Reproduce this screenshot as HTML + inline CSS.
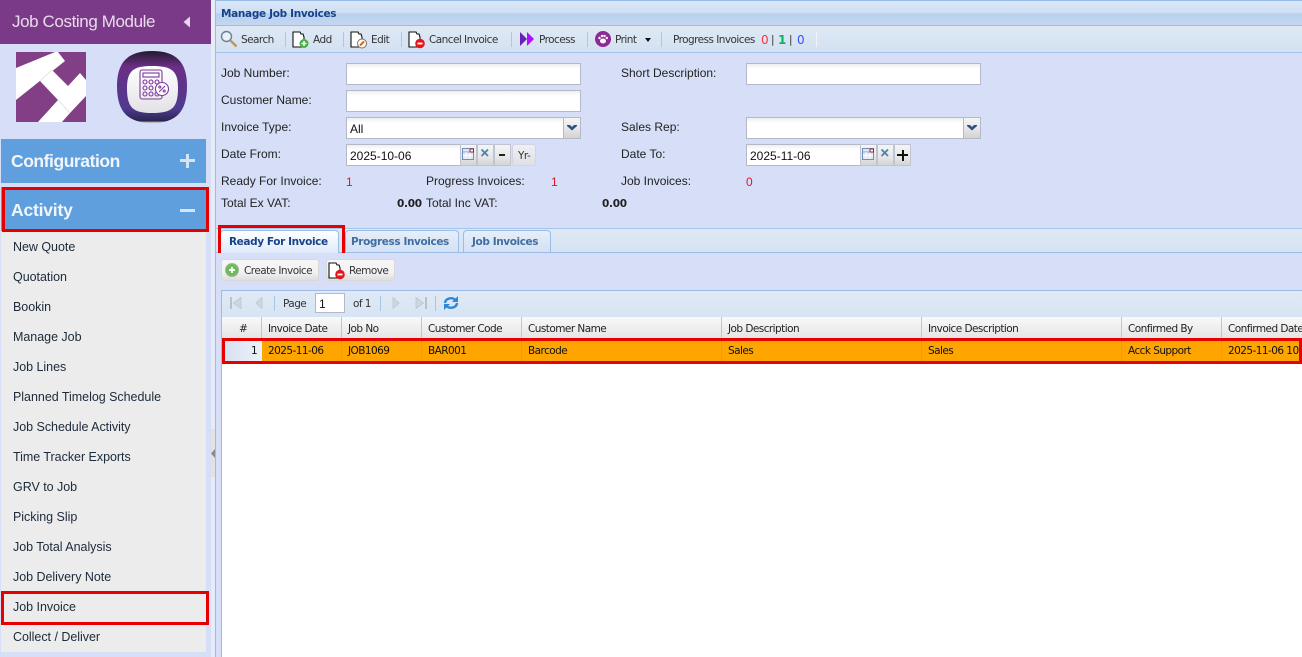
<!DOCTYPE html>
<html><head><meta charset="utf-8"><title>Manage Job Invoices</title>
<style>
html,body{margin:0;padding:0;width:1302px;height:657px;overflow:hidden;background:#fff}
body{position:relative;font-family:"Liberation Sans",sans-serif;color:#000}
div,span.t,svg{position:absolute}
.t{position:absolute;white-space:nowrap;line-height:14px}
.m{font:12.5px/16px "Liberation Sans",sans-serif;color:#1c2a3a;left:13px;white-space:nowrap;position:absolute;letter-spacing:-.03px}
.l{font:12px/14px "Liberation Sans",sans-serif;color:#222}
.d{font:10.5px/14px "DejaVu Sans",sans-serif;letter-spacing:-.55px;color:#333}
.g{font:10.5px/14px "DejaVu Sans",sans-serif;letter-spacing:-.55px;color:#222}
.r{font:10.5px/14px "DejaVu Sans",sans-serif;letter-spacing:-.55px;color:#111}
.b{font:bold 10.5px/14px "DejaVu Sans",sans-serif;letter-spacing:-.4px}
.inp{background:linear-gradient(#eef1f0,#fff 5px);border:1px solid #b5b8c8;box-sizing:border-box;height:22px}
.val{font:12px/14px "Liberation Sans",sans-serif;color:#111}
.sep{width:1px;background:#a9c8ec;height:15px;top:32px}
.btn{box-sizing:border-box;background:linear-gradient(#f4f5f6,#e6e7e8 60%,#d4d4d6);border:1px solid #c0c3d2;height:22px;top:144px}
.dd{box-sizing:border-box;background:linear-gradient(#f4f5f5,#e6e6e6 55%,#d2d2d2);border:1px solid #b5b8c8;width:18px;height:22px;top:117px}
</style></head><body>

<!-- Sidebar -->
<div style="left:0;top:0;width:211px;height:657px;background:#d6dff7"></div>
<div style="left:0;top:0;width:211px;height:44px;background:#7b3a87"></div>
<span class="t" style="left:12px;top:11px;font-size:17px;line-height:22px;color:#e9dcec;letter-spacing:-.4px">Job Costing Module</span>
<svg style="left:183px;top:16px" width="8" height="12"><path d="M7 0.5V11.5L0.5 6Z" fill="#e6d9e9"/></svg>

<svg style="left:16px;top:52px" width="70" height="70" viewBox="0 0 70 70">
<rect width="70" height="70" fill="#823f86"/>
<path d="M0 16L39 0H42L49 9L0 48Z" fill="#fff"/>
<path d="M24 29L36 18L52 34L64 21L70 28V44L54 61L42 48Z" fill="#fff"/>
<path d="M22 70L42 48L54 61L46 70Z" fill="#fff"/>
<path d="M36 18L24 29M42 48L54 61" stroke="#d8d8d8" stroke-width=".6"/>
</svg>
<svg style="left:116px;top:50px" width="72" height="74" viewBox="0 0 72 74">
<defs><linearGradient id="a" x1="0" y1="0" x2="0" y2="1"><stop offset="0" stop-color="#241a2e"/><stop offset=".22" stop-color="#6a2f85"/><stop offset=".8" stop-color="#4f3a8f"/><stop offset=".97" stop-color="#2b2550"/><stop offset="1" stop-color="#ddd"/></linearGradient>
<linearGradient id="b" x1="0" y1="0" x2="0" y2="1"><stop offset="0" stop-color="#fff"/><stop offset="1" stop-color="#e3e1e6"/></linearGradient></defs>
<path d="M36 1C60 1 71 12 71 36C71 62 60 73 36 73C12 73 1 62 1 36C1 12 12 1 36 1Z" fill="url(#a)"/>
<path d="M36 16C56 16 62 21 62 38C62 58 56 63 36 63C17 63 11 58 11 38C11 21 17 16 36 16Z" fill="url(#b)"/>
<g fill="none" stroke="#7d3a9c" stroke-width="1.1">
<rect x="24" y="20" width="22" height="29" rx="2"/><rect x="27" y="23" width="16" height="4"/>
<circle cx="29" cy="32" r="2"/><circle cx="35" cy="32" r="2"/><circle cx="41" cy="32" r="2"/>
<circle cx="29" cy="38" r="2"/><circle cx="35" cy="38" r="2"/>
<circle cx="29" cy="44" r="2"/><circle cx="35" cy="44" r="2"/><circle cx="41" cy="44" r="2"/>
<circle cx="46" cy="39" r="6.5" fill="#fff"/><path d="M43 42L49 36"/><circle cx="43.8" cy="37" r="1"/><circle cx="48.2" cy="41" r="1"/>
</g></svg>

<div style="left:1px;top:139px;width:205px;height:44px;background:#5f9fdd"></div>
<span class="t" style="left:11px;top:150px;font-size:17.5px;line-height:22px;font-weight:bold;color:#f0f6fc;letter-spacing:-.45px">Configuration</span>
<div style="left:180px;top:159px;width:15px;height:3px;background:#d6e5f5"></div>
<div style="left:186px;top:154px;width:3px;height:14px;background:#d6e5f5"></div>

<div style="left:1px;top:187px;width:205px;height:44px;background:#5f9fdd"></div>
<span class="t" style="left:11px;top:199px;font-size:17.5px;line-height:22px;font-weight:bold;color:#f0f6fc;letter-spacing:-.2px">Activity</span>
<div style="left:180px;top:209px;width:15px;height:3px;background:#d6e5f5"></div>
<div style="left:1px;top:232px;width:205px;height:420px;background:#ececec"></div>
<div style="left:2px;top:187px;width:207px;height:45px;box-sizing:border-box;border:3px solid #e60000"></div>

<span class="m" style="top:239px">New Quote</span>
<span class="m" style="top:269px">Quotation</span>
<span class="m" style="top:299px">Bookin</span>
<span class="m" style="top:329px">Manage Job</span>
<span class="m" style="top:359px">Job Lines</span>
<span class="m" style="top:389px">Planned Timelog Schedule</span>
<span class="m" style="top:419px">Job Schedule Activity</span>
<span class="m" style="top:449px">Time Tracker Exports</span>
<span class="m" style="top:479px">GRV to Job</span>
<span class="m" style="top:509px">Picking Slip</span>
<span class="m" style="top:539px">Job Total Analysis</span>
<span class="m" style="top:569px">Job Delivery Note</span>
<span class="m" style="top:599px">Job Invoice</span>
<span class="m" style="top:629px">Collect / Deliver</span>
<div style="left:1px;top:591px;width:208px;height:34px;box-sizing:border-box;border:3px solid #e60000"></div>

<!-- Splitter -->
<div style="left:211px;top:0;width:4px;height:657px;background:#e6ebf9"></div>
<div style="left:211px;top:429px;width:4px;height:48px;background:#e4e2de"></div>
<svg style="left:211px;top:449px" width="5" height="9"><path d="M4 0V9L0 4.5Z" fill="#8a8a8a"/></svg>

<!-- Main -->
<div style="left:215px;top:0;width:1087px;height:657px;background:#fff;border-left:1px solid #99bce8;box-sizing:border-box"></div>
<div style="left:216px;top:0;width:1086px;height:1px;background:#99bce8"></div>
<div style="left:216px;top:1px;width:1086px;height:24px;background:linear-gradient(#dae7f6 0,#cedff5 50%,#b9d0ee 52%,#c4d6f0 100%)"></div>
<div style="left:216px;top:25px;width:1086px;height:1px;background:#99bce8"></div>
<span class="t b" style="left:221px;top:7px;color:#15428b;letter-spacing:-.32px">Manage Job Invoices</span>

<div style="left:216px;top:26px;width:1086px;height:26px;background:linear-gradient(#dfe9f5,#d3e1f1)"></div>
<div style="left:216px;top:52px;width:1086px;height:1px;background:#a4c4ea"></div>

<!-- toolbar icons -->
<svg style="left:220px;top:30px" width="18" height="18"><circle cx="6.5" cy="6.5" r="5" fill="#e8f0f8" stroke="#6d7f94" stroke-width="1.4"/><path d="M10.5 10.5L16.5 16.5" stroke="#c09a52" stroke-width="2.5"/></svg>
<span class="t d" style="left:241px;top:33px">Search</span>
<div class="sep" style="left:285px"></div>
<svg style="left:292px;top:31px" width="18" height="18"><path d="M1 1H8L9 3L11 3L12 6V11H10V16H1Z" fill="#fff" stroke="#111" stroke-width="1.1"/><circle cx="12" cy="12.5" r="4.5" fill="#45b045"/><path d="M9.5 12.5H14.5M12 10V15" stroke="#fff" stroke-width="1.5"/></svg>
<span class="t d" style="left:313px;top:33px">Add</span>
<div class="sep" style="left:343px"></div>
<svg style="left:350px;top:31px" width="18" height="18"><path d="M1 1H8L9 3L11 3L12 6V11H10V16H1Z" fill="#fff" stroke="#111" stroke-width="1.1"/><circle cx="12" cy="12.5" r="4.5" fill="#fff" stroke="#8a6a5a"/><path d="M10 14.5L14 10.5" stroke="#d46a10" stroke-width="2"/></svg>
<span class="t d" style="left:371px;top:33px">Edit</span>
<div class="sep" style="left:401px"></div>
<svg style="left:408px;top:31px" width="18" height="18"><path d="M1 1H8L9 3L11 3L12 6V11H10V16H1Z" fill="#fff" stroke="#111" stroke-width="1.1"/><circle cx="12" cy="12.5" r="4.8" fill="#e8141c"/><path d="M9.5 12.5H14.5" stroke="#fff" stroke-width="1.8"/></svg>
<span class="t d" style="left:429px;top:33px">Cancel Invoice</span>
<div class="sep" style="left:511px"></div>
<svg style="left:520px;top:32px" width="15" height="14"><path d="M0 0L7 7L0 14Z" fill="#6a1fb8"/><path d="M7 0L14 7L7 14Z" fill="#b010ff"/></svg>
<span class="t d" style="left:539px;top:33px">Process</span>
<div class="sep" style="left:587px"></div>
<svg style="left:595px;top:31px" width="16" height="16"><circle cx="8" cy="8" r="8" fill="#8e2a94"/><ellipse cx="8" cy="10" rx="3" ry="2.5" fill="#fff"/><circle cx="4.5" cy="7" r="1.2" fill="#fff"/><circle cx="7" cy="5" r="1.2" fill="#fff"/><circle cx="9.5" cy="5" r="1.2" fill="#fff"/><circle cx="11.8" cy="7" r="1.2" fill="#fff"/></svg>
<span class="t d" style="left:615px;top:33px">Print</span>
<svg style="left:645px;top:38px" width="6" height="4"><path d="M0 0H6L3 4Z" fill="#111"/></svg>
<div class="sep" style="left:661px"></div>
<span class="t d" style="left:673px;top:33px">Progress Invoices</span>
<span class="t" style="left:761px;top:33px;font:12px/14px 'DejaVu Sans',sans-serif;letter-spacing:-.5px;color:#f03a3a">0</span>
<span class="t d" style="left:771px;top:33px">|</span>
<span class="t" style="left:778px;top:33px;font:bold 12px/14px 'DejaVu Sans',sans-serif;letter-spacing:-.5px;color:#10b060">1</span>
<span class="t d" style="left:789px;top:33px">|</span>
<span class="t" style="left:797px;top:33px;font:12px/14px 'DejaVu Sans',sans-serif;letter-spacing:-.5px;color:#3a50f0">0</span>
<div class="sep" style="left:816px;background:#eef4fb"></div>

<!-- Form -->
<div style="left:216px;top:53px;width:1086px;height:175px;background:#d6dff7"></div>
<span class="t l" style="left:221px;top:66px">Job Number:</span>
<div class="inp" style="left:346px;top:63px;width:235px"></div>
<span class="t l" style="left:621px;top:66px">Short Description:</span>
<div class="inp" style="left:746px;top:63px;width:235px"></div>
<span class="t l" style="left:221px;top:93px">Customer Name:</span>
<div class="inp" style="left:346px;top:90px;width:235px"></div>
<span class="t l" style="left:221px;top:120px">Invoice Type:</span>
<div class="inp" style="left:346px;top:117px;width:235px"></div>
<span class="t val" style="left:350px;top:122px">All</span>
<div class="dd" style="left:563px"></div>
<svg style="left:566px;top:125px" width="12" height="6"><path d="M1 0H4L6 2L8 0H11V1L6 5.5L1 1Z" fill="#2b4f88"/></svg>
<span class="t l" style="left:621px;top:120px">Sales Rep:</span>
<div class="inp" style="left:746px;top:117px;width:235px"></div>
<div class="dd" style="left:963px"></div>
<svg style="left:966px;top:125px" width="12" height="6"><path d="M1 0H4L6 2L8 0H11V1L6 5.5L1 1Z" fill="#2b4f88"/></svg>

<span class="t l" style="left:221px;top:147px">Date From:</span>
<div class="inp" style="left:346px;top:144px;width:115px"></div>
<span class="t val" style="left:350px;top:149px">2025-10-06</span>
<div class="btn" style="left:460px;width:17px"></div>
<svg style="left:462px;top:148px" width="13" height="13"><rect x=".5" y=".5" width="11" height="11" fill="#dfe7f2" stroke="#6f8fb8"/><path d="M1 4H11" stroke="#8faacb"/><path d="M4 4V11M8 4V11M1 7.5H11" stroke="#fff"/><rect x="8" y="1" width="3.5" height="3" fill="#fff" stroke="#a02030"/></svg>
<div class="btn" style="left:477px;width:17px"></div>
<svg style="left:480px;top:148px" width="10" height="10"><path d="M1.5 1.5L8 8M8 1.5L1.5 8" stroke="#4f81b8" stroke-width="1.8"/></svg>
<div class="btn" style="left:494px;width:17px"></div>
<div style="left:499px;top:154px;width:6px;height:2px;background:#222"></div>
<div class="btn" style="left:512px;width:24px;border-radius:3px;background:linear-gradient(#eef0f4,#dfe0e4);border-color:#d0d4e4"></div>
<span class="t d" style="left:518px;top:149px">Yr-</span>

<span class="t l" style="left:621px;top:147px">Date To:</span>
<div class="inp" style="left:746px;top:144px;width:115px"></div>
<span class="t val" style="left:750px;top:149px">2025-11-06</span>
<div class="btn" style="left:860px;width:17px"></div>
<svg style="left:862px;top:148px" width="13" height="13"><rect x=".5" y=".5" width="11" height="11" fill="#dfe7f2" stroke="#6f8fb8"/><path d="M1 4H11" stroke="#8faacb"/><path d="M4 4V11M8 4V11M1 7.5H11" stroke="#fff"/><rect x="8" y="1" width="3.5" height="3" fill="#fff" stroke="#a02030"/></svg>
<div class="btn" style="left:877px;width:17px"></div>
<svg style="left:880px;top:148px" width="10" height="10"><path d="M1.5 1.5L8 8M8 1.5L1.5 8" stroke="#4f81b8" stroke-width="1.8"/></svg>
<div class="btn" style="left:894px;width:17px"></div>
<div style="left:897px;top:154px;width:11px;height:2px;background:#111"></div>
<div style="left:901.5px;top:150px;width:2px;height:11px;background:#111"></div>

<span class="t l" style="left:221px;top:174px">Ready For Invoice:</span>
<span class="t l" style="left:346px;top:175px;color:#e8141c">1</span>
<span class="t l" style="left:426px;top:174px">Progress Invoices:</span>
<span class="t l" style="left:551px;top:175px;color:#e8141c">1</span>
<span class="t l" style="left:621px;top:174px">Job Invoices:</span>
<span class="t l" style="left:746px;top:175px;color:#e8141c">0</span>
<span class="t l" style="left:221px;top:196px">Total Ex VAT:</span>
<span class="t" style="left:397px;top:197px;font:bold 10.5px/14px 'DejaVu Sans',sans-serif;color:#222;letter-spacing:-.3px">0.00</span>
<span class="t l" style="left:426px;top:196px">Total Inc VAT:</span>
<span class="t" style="left:602px;top:197px;font:bold 10.5px/14px 'DejaVu Sans',sans-serif;color:#222;letter-spacing:-.3px">0.00</span>

<!-- Tab strip -->
<div style="left:216px;top:228px;width:1086px;height:1px;background:#a4c4ea"></div>
<div style="left:216px;top:229px;width:1086px;height:23px;background:linear-gradient(#dfe9f5,#d6e3f2)"></div>
<div style="left:216px;top:252px;width:1086px;height:1px;background:#99bce8"></div>
<div style="left:220px;top:230px;width:119px;height:23px;box-sizing:border-box;background:linear-gradient(#fff,#dfeafa);border:1px solid #99bce8;border-bottom:none;border-radius:4px 4px 0 0"></div>
<span class="t b" style="left:229px;top:235px;color:#15428b">Ready For Invoice</span>
<div style="left:345px;top:230px;width:114px;height:22px;box-sizing:border-box;background:linear-gradient(#e6eff9,#d3e1f3);border:1px solid #99bce8;border-bottom:none;border-radius:4px 4px 0 0"></div>
<span class="t b" style="left:351px;top:235px;color:#416da3">Progress Invoices</span>
<div style="left:463px;top:230px;width:88px;height:22px;box-sizing:border-box;background:linear-gradient(#e6eff9,#d3e1f3);border:1px solid #99bce8;border-bottom:none;border-radius:4px 4px 0 0"></div>
<span class="t b" style="left:472px;top:235px;color:#416da3">Job Invoices</span>
<div style="left:218px;top:225px;width:127px;height:34px;box-sizing:border-box;border:3px solid #e60000"></div>

<!-- Action row -->
<div style="left:216px;top:253px;width:1086px;height:37px;background:#d6dff7"></div>
<div style="left:221px;top:259px;width:98px;height:22px;box-sizing:border-box;background:linear-gradient(#f6f6f6,#f2f2f2 60%,#dedede);border:1px solid #d8d8d8;border-radius:3px"></div>
<svg style="left:225px;top:263px" width="14" height="14"><circle cx="7" cy="7" r="6.5" fill="#6ebb5a" stroke="#9ab89a"/><path d="M4 7H10M7 4V10" stroke="#fff" stroke-width="1.8"/></svg>
<span class="t d" style="left:244px;top:264px">Create Invoice</span>
<div style="left:326px;top:259px;width:69px;height:22px;box-sizing:border-box;background:linear-gradient(#f6f6f6,#f2f2f2 60%,#dedede);border:1px solid #d8d8d8;border-radius:3px"></div>
<svg style="left:328px;top:262px" width="18" height="18"><path d="M1 1H8L9 3L11 3L12 6V11H10V16H1Z" fill="#fff" stroke="#111" stroke-width="1.1"/><circle cx="12" cy="12.5" r="4.8" fill="#e8141c"/><path d="M9.5 12.5H14.5" stroke="#fff" stroke-width="1.8"/></svg>
<span class="t d" style="left:349px;top:264px">Remove</span>

<!-- Grid -->
<div style="left:221px;top:290px;width:1081px;height:1px;background:#99bce8"></div>
<div style="left:222px;top:291px;width:1080px;height:26px;background:linear-gradient(#e0eaf6,#d7e4f3)"></div>
<div style="left:221px;top:290px;width:1px;height:367px;background:#99bce8"></div>
<div style="left:216px;top:290px;width:5px;height:367px;background:#d6dff7"></div>
<svg style="left:230px;top:297px" width="12" height="12"><path d="M1 0V12" stroke="#b8c2cc" stroke-width="2"/><path d="M11 0.5V11.5L3.5 6Z" fill="#cfd6dd" stroke="#bcc5ce" stroke-width=".8"/></svg>
<svg style="left:255px;top:297px" width="8" height="12"><path d="M7 0.5V11.5L1 6Z" fill="#cfd6dd" stroke="#bcc5ce" stroke-width=".8"/></svg>
<div style="left:274px;top:296px;width:1px;height:15px;background:#a9c5e6"></div>
<span class="t d" style="left:283px;top:297px;color:#333">Page</span>
<div style="left:315px;top:293px;width:30px;height:20px;box-sizing:border-box;background:#fff;border:1px solid #b5b8c8"></div>
<span class="t val" style="left:319px;top:297px">1</span>
<span class="t d" style="left:353px;top:297px">of 1</span>
<div style="left:380px;top:296px;width:1px;height:15px;background:#a9c5e6"></div>
<svg style="left:392px;top:297px" width="8" height="12"><path d="M1 0.5V11.5L7 6Z" fill="#cfd6dd" stroke="#bcc5ce" stroke-width=".8"/></svg>
<svg style="left:415px;top:297px" width="12" height="12"><path d="M11 0V12" stroke="#b8c2cc" stroke-width="2"/><path d="M1 0.5V11.5L8.5 6Z" fill="#cfd6dd" stroke="#bcc5ce" stroke-width=".8"/></svg>
<div style="left:435px;top:296px;width:1px;height:15px;background:#a9c5e6"></div>
<svg style="left:443px;top:295px" width="16" height="16" fill="none" stroke="#2e87d8" stroke-width="2.4"><path d="M2 8A6 5 0 0 1 12 4.5"/><path d="M14 8A6 5 0 0 1 4 11.5"/><path d="M15 1V7H9Z" fill="#2e87d8" stroke="none"/><path d="M1 15V9H7Z" fill="#2e87d8" stroke="none"/></svg>

<!-- header row -->
<div style="left:222px;top:317px;width:1080px;height:22px;background:linear-gradient(#f9f9f9,#e4e4e4)"></div>
<div style="left:222px;top:339px;width:1080px;height:1px;background:#c5c5c5"></div>
<div style="left:261px;top:317px;width:1px;height:22px;background:#c5c5c5"></div>
<div style="left:341px;top:317px;width:1px;height:22px;background:#c5c5c5"></div>
<div style="left:421px;top:317px;width:1px;height:22px;background:#c5c5c5"></div>
<div style="left:521px;top:317px;width:1px;height:22px;background:#c5c5c5"></div>
<div style="left:721px;top:317px;width:1px;height:22px;background:#c5c5c5"></div>
<div style="left:921px;top:317px;width:1px;height:22px;background:#c5c5c5"></div>
<div style="left:1121px;top:317px;width:1px;height:22px;background:#c5c5c5"></div>
<div style="left:1221px;top:317px;width:1px;height:22px;background:#c5c5c5"></div>
<span class="t g" style="left:239px;top:322px">#</span>
<span class="t g" style="left:268px;top:322px">Invoice Date</span>
<span class="t g" style="left:348px;top:322px">Job No</span>
<span class="t g" style="left:428px;top:322px">Customer Code</span>
<span class="t g" style="left:528px;top:322px">Customer Name</span>
<span class="t g" style="left:728px;top:322px">Job Description</span>
<span class="t g" style="left:928px;top:322px">Invoice Description</span>
<span class="t g" style="left:1128px;top:322px">Confirmed By</span>
<span class="t g" style="left:1228px;top:322px">Confirmed Date</span>

<!-- data row -->
<div style="left:222px;top:340px;width:40px;height:22px;background:linear-gradient(90deg,#d4e0f2,#eef2f8)"></div>
<div style="left:262px;top:340px;width:1040px;height:22px;background:#ffa500"></div>
<div style="left:341px;top:341px;width:0;height:20px;border-left:1px dotted #b89a60"></div>
<div style="left:421px;top:341px;width:0;height:20px;border-left:1px dotted #b89a60"></div>
<div style="left:521px;top:341px;width:0;height:20px;border-left:1px dotted #b89a60"></div>
<div style="left:721px;top:341px;width:0;height:20px;border-left:1px dotted #b89a60"></div>
<div style="left:921px;top:341px;width:0;height:20px;border-left:1px dotted #b89a60"></div>
<div style="left:1121px;top:341px;width:0;height:20px;border-left:1px dotted #b89a60"></div>
<div style="left:1221px;top:341px;width:0;height:20px;border-left:1px dotted #b89a60"></div>
<span class="t r" style="left:251px;top:344px">1</span>
<span class="t r" style="left:268px;top:344px">2025-11-06</span>
<span class="t r" style="left:348px;top:344px">JOB1069</span>
<span class="t r" style="left:428px;top:344px">BAR001</span>
<span class="t r" style="left:528px;top:344px">Barcode</span>
<span class="t r" style="left:728px;top:344px">Sales</span>
<span class="t r" style="left:928px;top:344px">Sales</span>
<span class="t r" style="left:1128px;top:344px">Acck Support</span>
<span class="t r" style="left:1228px;top:344px;width:71px;overflow:hidden;display:block">2025-11-06 10:15</span>
<div style="left:222px;top:338px;width:1080px;height:26px;box-sizing:border-box;border:3px solid #e60000"></div>
</body></html>
